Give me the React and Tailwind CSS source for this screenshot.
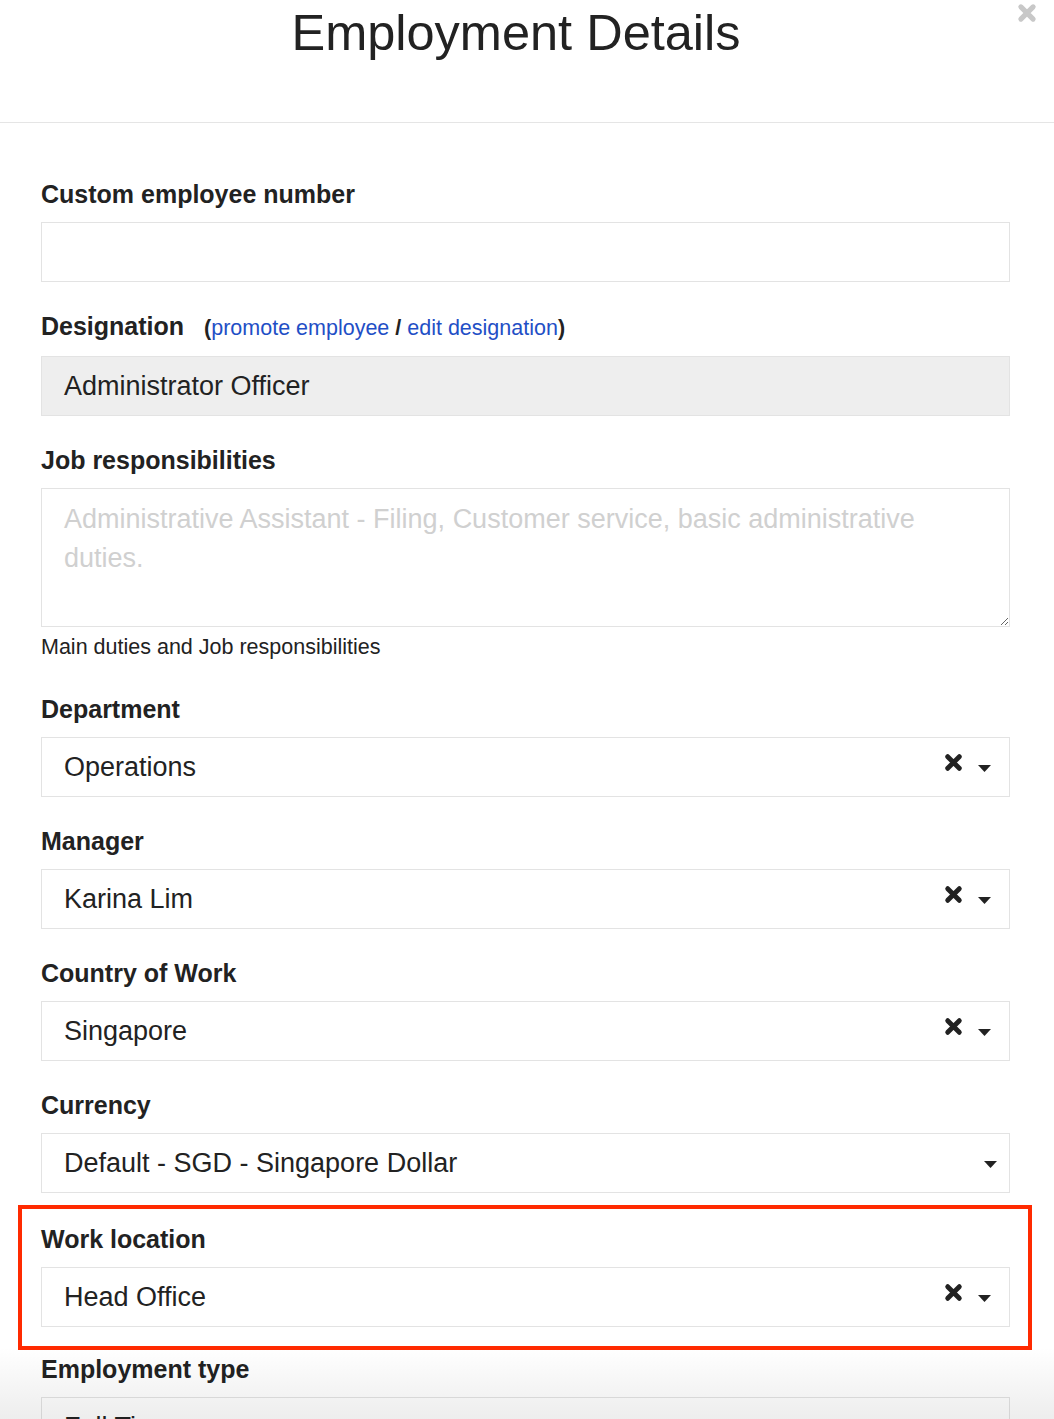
import React from 'react';

const font = { fontFamily: '"Liberation Sans", Arial, Helvetica, sans-serif' };

const HeavyX = ({ className = '', color = '#222' }) => (
    <svg viewBox="0 0 18 18" className={className} aria-hidden="true">
        <path d="M3.5 3.5 L14.5 14.5 M14.5 3.5 L3.5 14.5" stroke={color} strokeWidth="4.6" strokeLinecap="round" fill="none" />
    </svg>
);

const Caret = ({ className = '' }) => (
    <svg viewBox="0 0 13 7" className={className} aria-hidden="true">
        <path d="M0 0 H13 L6.5 7 Z" fill="#222" />
    </svg>
);

const Label = ({ children }) => (
    <div className="text-[25px] leading-[28px] font-bold text-[#222] mb-[14px]">{children}</div>
);

// select with optional clear button
const Select = ({ value, clearable = true }) => (
    <div className="h-[60px] border border-[#e3e3e3] bg-white flex items-center pl-[22px] pr-[18px]">
        <span className="flex-1 text-[27px] text-[#222]">{value}</span>
        {clearable ? (
            <>
                <HeavyX className="w-[19px] h-[19px] -mt-[9px] mr-[15px]" />
                <Caret className="w-[13px] h-[7px] mt-[2px]" />
            </>
        ) : (
            <Caret className="w-[13px] h-[7px] mt-[2px] mr-[-6px]" />
        )}
    </div>
);

const Group = ({ label, children, className = '' }) => (
    <div className={`mb-[30px] ${className}`}>
        <Label>{label}</Label>
        {children}
    </div>
);

export default function App() {
    return (
        <div className="relative h-[1419px] overflow-hidden bg-white text-[#222]" style={font}>
            {/* Header */}
            <div className="relative h-[123px] border-b border-[#e5e5e5] pr-[22px]">
                <h1 className="text-center text-[50.5px] leading-none pt-[8px] text-[#222]">Employment Details</h1>
                <button className="absolute top-[3px] right-[17px] w-[20px] h-[20px]">
                    <HeavyX className="w-[20px] h-[20px]" color="#c8c8c8" />
                </button>
            </div>

            {/* Body */}
            <div className="pl-[41px] pr-[44px] pt-[57px]">
                <Group label="Custom employee number">
                    <input className="block w-full h-[60px] border border-[#e3e3e3] px-[22px] text-[27px] outline-none" />
                </Group>

                <div className="mb-[30px]">
                    <div className="flex items-baseline mb-[14px] leading-[28px]">
                        <span className="text-[25px] font-bold">Designation</span>
                        <span className="ml-[20px] text-[21.5px]">
                            <b>(</b>
                            <a href="#" className="text-[#1f4fc6]">promote employee</a>
                            <b> / </b>
                            <a href="#" className="text-[#1f4fc6]">edit designation</a>
                            <b>)</b>
                        </span>
                    </div>
                    <div className="h-[60px] border border-[#e3e3e3] bg-[#eeeeee] flex items-center px-[22px] text-[27px]">
                        Administrator Officer
                    </div>
                </div>

                <div className="mb-[36px]">
                    <Label>Job responsibilities</Label>
                    <textarea
                        className="block w-full h-[139px] border border-[#e3e3e3] px-[22px] py-[11px] text-[27px] leading-[39px] outline-none placeholder:text-[#d0d0d0]"
                        placeholder="Administrative Assistant - Filing, Customer service, basic administrative duties."
                    />
                    <div className="mt-[8px] text-[21.5px] leading-[24px]">Main duties and Job responsibilities</div>
                </div>

                <Group label="Department">
                    <Select value="Operations" />
                </Group>
                <Group label="Manager">
                    <Select value="Karina Lim" />
                </Group>
                <Group label="Country of Work">
                    <Select value="Singapore" />
                </Group>
                <Group label="Currency">
                    <Select value="Default - SGD - Singapore Dollar" clearable={false} />
                </Group>

                <div className="relative mt-[32px] mb-[28px]">
                    <div className="absolute -top-[20px] -bottom-[23px] -left-[23px] -right-[22px] border-4 border-[#ff2a00] pointer-events-none" />
                    <Label>Work location</Label>
                    <Select value="Head Office" />
                </div>

                <Group label="Employment type">
                    <div className="h-[60px] border border-[#e3e3e3] bg-white flex items-center px-[22px] text-[27px]">
                        Full Time
                    </div>
                </Group>
            </div>

            {/* bottom fade */}
            <div className="absolute left-0 right-0 bottom-0 h-[72px] bg-linear-to-b from-black/0 to-black/[0.07] pointer-events-none" />
        </div>
    );
}
